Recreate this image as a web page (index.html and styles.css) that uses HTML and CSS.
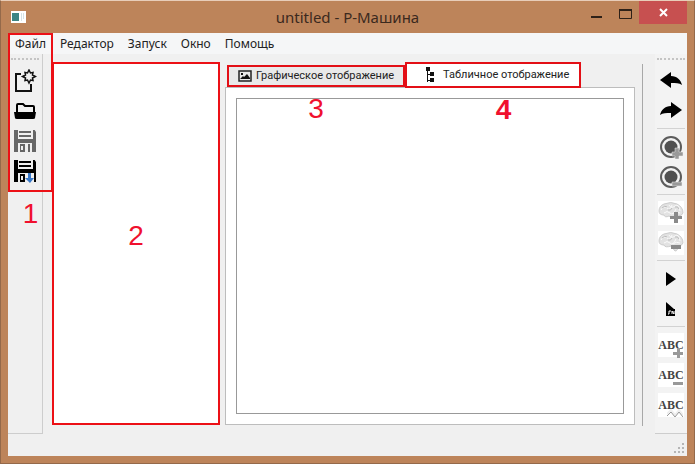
FILE: index.html
```html
<!DOCTYPE html>
<html lang="ru">
<head>
<meta charset="utf-8">
<title>untitled - Р-Машина</title>
<link rel="stylesheet" href="styles.css">
</head>
<body>
<div class="window">
  <header class="titlebar">
    <svg class="app-icon" width="15" height="12" viewBox="0 0 15 12" aria-hidden="true"><path fill="#fff" d="M0 0h15v12H0z"/><path fill="#3d8584" d="M1 2h7v8H1z"/><path stroke="#a9c8cc" stroke-dasharray="1 1" d="M10 3h3M10 5h3M10 7h3M10 9h2"/></svg>
    <h1 class="title">untitled - Р-Машина</h1>
    <div class="controls">
      <button class="control" aria-label="Свернуть"><svg width="12" height="14" viewBox="0 0 12 14"><path fill="#2e2118" d="M0 10h11v2H0z"/></svg></button>
      <button class="control" aria-label="Развернуть"><svg width="13" height="14" viewBox="0 0 13 14"><path fill="none" stroke="#2e2118" d="M.5 3.500h12v9H.5z"/><path fill="#2e2118" d="M0 3h13v2H0z"/></svg></button>
      <button class="control close" aria-label="Закрыть"><svg width="9" height="9" viewBox="0 0 9 9"><path stroke="#fff" stroke-width="2" d="M1 1l7 7M8 1L1 8"/></svg></button>
    </div>
  </header>

  <div class="client">
    <nav class="menubar">
      <button class="menu">Файл</button>
      <button class="menu">Редактор</button>
      <button class="menu">Запуск</button>
      <button class="menu">Окно</button>
      <button class="menu">Помощь</button>
    </nav>

    <main class="workspace">
      <div class="toolbar toolbar-file">
        <div class="grip"></div>
        <button class="tool" aria-label="Создать"><svg width="24" height="24" viewBox="0 0 24 24"><path fill="none" stroke="#111" stroke-width="2" d="M8 5H3v17h15v-7"/><path fill="#efefef" stroke="#111" stroke-width="1.500" d="M16 1l1.500 3L20 3.500 19.500 6l3 1.500-3 1.500.5 2.500-2.500-.5L16 14l-1.500-3-2.500.5.5-2.500-3-1.500 3-1.500L12 3.500l2.500.5z"/></svg></button>
        <button class="tool" aria-label="Открыть"><svg width="24" height="24" viewBox="0 0 24 24"><path fill="none" stroke="#000" stroke-width="2" d="M4 13V6q0-1 1-1h5l2 2h8q1 0 1 1v5"/><path d="M1 13h22l-1 6q0 1-2 1H4q-2 0-2-1z"/></svg></button>
        <button class="tool" aria-label="Сохранить"><svg width="24" height="24" viewBox="0 0 24 24"><path fill="#666" d="M1 1h4v9h15V1h3v22H1z"/><path fill="#efefef" d="M5 1h15v9H5zM5 14h14v9H5zM21 0h2v3z"/><path fill="#666" d="M6 2h12v2H6zM6 6h12v2H6zM7 15h5v8H7zM15 15h2v8h-2z"/><path fill="#efefef" d="M8 17h2v4H8z"/></svg></button>
        <button class="tool" aria-label="Сохранить как"><svg width="24" height="24" viewBox="0 0 24 24"><path d="M1 1h4v9h15V1h3v22H1z"/><path fill="#efefef" d="M5 1h15v9H5zM5 14h16v9H5zM21 0h2v3z"/><path d="M6 2h12v2H6zM6 6h12v2H6zM7 15h5v8H7z"/><path fill="#efefef" d="M8 17h2v4H8z"/><path fill="#3778c8" d="M15 14h3v5h3l-4 5-5-5h3z"/></svg></button>
        <span class="mark mark-file"><b class="digit">1</b></span>
      </div>

      <section class="list-pane"><span class="mark mark-list"><b class="digit">2</b></span></section>

      <section class="tabs">
        <div class="tab-row" role="tablist">
          <button class="tab" role="tab" aria-selected="false">
            <svg width="14" height="12" viewBox="0 0 14 12"><path fill="none" stroke="#222" stroke-width="1.500" d="M1 1h12v10H1z"/><path fill="#111" d="M2 9l3-3 1 1 3-3 3 4v1zM3 3h2v2H3z"/></svg>
            <span>Графическое отображение</span>
            <b class="digit">3</b>
          </button>
          <button class="tab active" role="tab" aria-selected="true">
            <svg width="10" height="16" viewBox="0 0 10 16"><path fill="#111" d="M1 0h4v4H1zM2 4h1v11H2zM5 5h4v4H5zM5 11h4v4H5zM3 7h2v1H3zM3 13h2v1H3z"/></svg>
            <span>Табличное отображение</span>
            <b class="digit">4</b>
          </button>
        </div>
        <div class="tab-page" role="tabpanel"><div class="canvas"></div></div>
      </section>

      <div class="splitter"></div>

      <div class="toolbar toolbar-edit">
        <div class="grip"></div>
        <button class="tool" aria-label="Отменить"><svg width="24" height="24" viewBox="0 0 24 24"><path d="M1 11L12 3v4c6 0 10 4 11 9-3-2-6-2-11-2v5z"/></svg></button>
        <button class="tool" aria-label="Повторить"><svg width="24" height="24" viewBox="0 0 24 24"><path d="M23 11L12 3v4C6 7 2 11 1 16c3-2 6-2 11-2v5z"/></svg></button>
        <hr class="separator">
        <button class="tool" aria-label="Добавить состояние"><svg width="24" height="24" viewBox="0 0 24 24"><circle cx="12" cy="12" r="10" fill="none" stroke="#5c5c5c" stroke-width="2"/><circle cx="12" cy="12" r="6.500" fill="#505050"/><path fill="#999" stroke="#eee" stroke-width=".5" d="M16 13h4v4h4v4h-4v3h-4v-3h-3v-4h3z"/></svg></button>
        <button class="tool" aria-label="Удалить состояние"><svg width="24" height="24" viewBox="0 0 24 24"><circle cx="12" cy="12" r="10" fill="none" stroke="#5c5c5c" stroke-width="2"/><circle cx="12" cy="12" r="6.500" fill="#505050"/><path fill="#999" stroke="#eee" stroke-width=".5" d="M13 17h10v4H13z"/></svg></button>
        <hr class="separator">
        <button class="tool" aria-label="Добавить память"><svg class="sheet" width="26" height="24" viewBox="0 0 26 24"><path fill="#e2e2e2" stroke="#ccc" d="M1 10q0-5 5-7 7-3 13 0 6 3 6 9-1 3-5 3-2 3-6 2l-3-2q-4 2-5-1-5 0-5-4z"/><path fill="none" stroke="#fafafa" d="M3 9q3-5 6-2t5-3M6 12q3-3 6 0t6-4M11 4q2 4 6 1t5 5M15 13q3-3 7-1"/><path fill="none" stroke="#bbb" d="M4 7q3-3 5-1M10 9q3 1 4-2M17 6q3-1 4 2"/><path fill="#8a8a8a" d="M16 11h4v4h4v3h-4v4h-4v-4h-4v-3h4z"/></svg></button>
        <button class="tool" aria-label="Удалить память"><svg class="sheet" width="26" height="24" viewBox="0 0 26 24"><path fill="#e2e2e2" stroke="#ccc" d="M1 10q0-5 5-7 7-3 13 0 6 3 6 9-1 3-5 3 0 5-3 5l-4-5q-6 2-7-1-5 0-5-4z"/><path fill="none" stroke="#fafafa" d="M3 9q3-5 6-2t5-3M6 12q3-3 6 0t6-4M11 4q2 4 6 1t5 5M15 13q3-3 7-1"/><path fill="none" stroke="#bbb" d="M4 7q3-3 5-1M10 9q3 1 4-2M17 6q3-1 4 2"/><path fill="#8a8a8a" d="M13 14h10v4H13z"/></svg></button>
        <hr class="separator">
        <button class="tool" aria-label="Запустить"><svg width="24" height="24" viewBox="0 0 24 24"><path d="M7 5l10 7-10 7z"/></svg></button>
        <button class="tool" aria-label="Выполнить шаг"><svg width="24" height="24" viewBox="0 0 24 24"><path d="M7 5l8 7h1v7H7z"/><path fill="none" stroke="#fff" d="M9 17h1v-3h2M13 17v-3l2 3v-3"/></svg></button>
        <hr class="separator">
        <button class="tool" aria-label="Добавить алфавит"><span class="abc">ABC</span><svg class="badge" width="10" height="10" viewBox="0 0 10 10"><path fill="#999" d="M4 0h3v4h3v3H7v3H4V7H0V4h4z"/></svg></button>
        <button class="tool" aria-label="Удалить алфавит"><span class="abc">ABC</span><svg class="badge" width="10" height="10" viewBox="0 0 10 10"><path fill="#999" d="M0 4h10v3H0z"/></svg></button>
        <button class="tool" aria-label="Изменить алфавит"><span class="abc">ABC</span><svg class="badge" width="16" height="10" viewBox="0 0 16 10"><path fill="none" stroke="#eee" stroke-width="2" d="M0 6l4-4 4 5 4-5 4 5"/><path fill="none" stroke="#999" d="M0 8l4-4 4 5 4-5 4 5"/></svg></button>
      </div>
    </main>

    <footer class="statusbar">
      <svg width="11" height="11" viewBox="0 0 11 11" aria-hidden="true"><path fill="#b5b5b5" d="M8 0h2v2H8zM4 4h2v2H4zM8 4h2v2H8zM0 8h2v2H0zM4 8h2v2H4zM8 8h2v2H8z"/></svg>
    </footer>
  </div>
</div>
</body>
</html>
```
FILE: styles.css
```css
* { box-sizing: border-box; }

body {
  margin: 0;
  font-family: "Noto Sans", "Open Sans", sans-serif;
  font-size: 12px;
  color: #222;
}

button {
  margin: 0;
  padding: 0;
  border: 0;
  background: none;
  color: inherit;
  font: inherit;
}

svg { display: block; flex: none; }

.window {
  display: flex;
  flex-direction: column;
  height: 100vh;
  padding: 0 7px 7px;
  background: #bd845a;
  border: 1px solid #94694a;
  border-top-color: #e8cdb9;
}

.titlebar {
  position: relative;
  display: flex;
  align-items: center;
  height: 32px;
  flex: none;
}

.app-icon { margin-left: 3px; }

.title {
  flex: 1;
  margin: 0;
  padding-left: 86px;
  text-align: center;
  font-size: 15px;
  line-height: 32px;
  font-weight: 400;
  color: #3b291e;
}

.controls {
  display: flex;
  align-self: flex-start;
}

.control {
  display: flex;
  align-items: center;
  justify-content: center;
  width: 28px;
  height: 23px;
}

.close {
  width: 48px;
  background: #c75050;
}

.client {
  flex: 1;
  min-height: 0;
  display: flex;
  flex-direction: column;
  background: #f0f0f0;
}

.menubar {
  display: flex;
  gap: 14px;
  height: 21px;
  flex: none;
  padding-left: 7px;
  background: #f5f6f7;
}

.menu { line-height: 20px; }

.workspace {
  flex: 1;
  min-height: 0;
  display: flex;
}

.toolbar {
  position: relative;
  display: flex;
  flex-direction: column;
  align-items: center;
  flex: none;
  border-bottom: 1px solid #cdcdcd;
}

.toolbar-file {
  width: 35px;
  border-right: 1px solid #cdcdcd;
}

.toolbar-edit {
  width: 32px;
  background: #f3f3f3;
}

.grip {
  width: 28px;
  height: 2px;
  margin: 4px 0 6px;
  border-top: 2px dotted #c4c4c4;
}

.tool {
  position: relative;
  display: flex;
  align-items: center;
  justify-content: center;
  width: 28px;
  height: 30px;
  flex: none;
}

.separator {
  width: 28px;
  height: 1px;
  flex: none;
  margin: 2px 0 3px;
  border: 0;
  background: #d2d2d2;
}

.sheet { background: #fff; }

.abc {
  width: 26px;
  background: #fff;
  font-family: "Liberation Serif", serif;
  font-size: 12px;
  font-weight: 700;
  line-height: 24px;
  color: #444;
  display: flex;
  justify-content: center;
}

.badge {
  position: absolute;
  right: 2px;
  bottom: 2px;
}

.list-pane {
  position: relative;
  width: 166px;
  flex: none;
  margin: 9px 0 10px 10px;
  background: #fff;
  border: 1px solid #aaa;
}

.tabs {
  flex: 1;
  min-width: 0;
  display: flex;
  flex-direction: column;
  margin: 8px 0 9px 6px;
}

.tab-row {
  display: flex;
  align-items: flex-end;
  height: 25px;
  padding-left: 2px;
  flex: none;
  font-family: Roboto, sans-serif;
  font-size: 11px;
  line-height: 16px;
}

.tab {
  position: relative;
  z-index: 1;
  display: flex;
  align-items: center;
  gap: 4px;
  height: 22px;
  padding: 0 9px;
  background: #e9e9e9;
  border: 2px solid #e30f16;
  white-space: nowrap;
}

.tab.active {
  height: 26px;
  margin-bottom: -1px;
  padding: 0 10px 0 18px;
  gap: 8px;
  background: #fff;
}

.tab-page {
  flex: 1;
  min-height: 0;
  padding: 10px;
  background: #fff;
  border: 1px solid #bdbdbd;
}

.canvas {
  height: 100%;
  border: 1px solid #999;
}

.splitter {
  width: 1px;
  margin: 10px 12px 8px 7px;
  background: #a8a8a8;
}

.statusbar {
  display: flex;
  align-items: flex-end;
  justify-content: flex-end;
  height: 22px;
  flex: none;
  padding: 2px;
}

/* Numbered callouts drawn over the interface */
.mark {
  position: absolute;
  z-index: 2;
  border: 2px solid #ec1016;
  pointer-events: none;
}

.mark-file {
  top: -21px;
  left: 0;
  width: 45px;
  height: 159px;
}

.mark-list { inset: -2px; }

.digit {
  position: absolute;
  left: 50%;
  top: 100%;
  transform: translateX(-50%);
  font-family: "Liberation Sans", sans-serif;
  font-size: 28px;
  line-height: 28px;
  font-weight: 400;
  color: #f0102e;
}

.active .digit {
  left: 56%;
  font-weight: 700;
}

.mark-file .digit { padding-top: 10px; }

.mark-list .digit { top: 44%; }

.tab .digit { padding-top: 10px; }
```
